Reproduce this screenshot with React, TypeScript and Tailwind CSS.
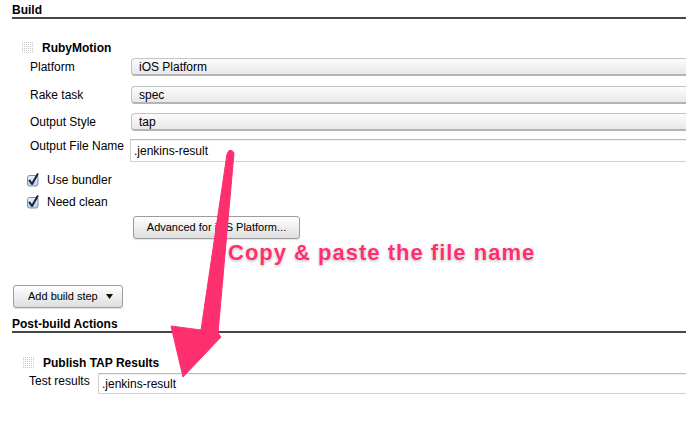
const SELECT =
  "flex items-center flex-1 h-[18px] -mr-3 pl-[7px] rounded-[4px] border border-[#c4c4c4] border-b-2 border-b-[#b4b4b4] bg-linear-to-b from-[#fcfcfc] to-[#e8e8e8] text-[12px] leading-none";
const TEXT_INPUT =
  "flex items-center flex-1 -mr-3 pl-[3px] border border-[#d2d2d2] border-t-[#b9b9b9] bg-white text-[12px] leading-none shadow-[inset_0_1px_1px_rgba(0,0,0,0.06)]";
const BTN =
  "flex items-center h-[23px] rounded-[3px] border border-[#9d9d9d] bg-linear-to-b from-white to-[#dedede] text-[11px] leading-none shadow-[0_1px_1px_rgba(0,0,0,0.12)]";
const SECTION_TITLE = "font-bold border-b-2 border-[#474747]";

function Grip() {
  const dots = [];
  for (let i = 0; i < 6; i++) {
    for (let j = 0; j < 6; j++) {
      dots.push(<rect key={`${i}-${j}`} x={i * 2} y={j * 2} width="1" height="1" fill="#c4c4c4" />);
    }
  }
  return (
    <svg width="12" height="12" viewBox="0 0 12 12" className="shrink-0">
      {dots}
    </svg>
  );
}

function Check() {
  return (
    <svg width="12" height="14" viewBox="0 0 12 14" className="shrink-0">
      <defs>
        <linearGradient id="cb" x1="0" y1="0" x2="0" y2="1">
          <stop offset="0" stopColor="#e9f1fa" />
          <stop offset="1" stopColor="#b9cfe8" />
        </linearGradient>
      </defs>
      <rect x="0.5" y="2.5" width="10.5" height="10.5" rx="2" fill="url(#cb)" stroke="#7d8ea6" />
      <path d="M2.6 7.6 L5 11 L10.6 1.2" fill="none" stroke="#15203a" strokeWidth="2" strokeLinecap="round" strokeLinejoin="round" />
    </svg>
  );
}

function SelectRow({ label, value, gap }: { label: string; value: string; gap: string }) {
  return (
    <div className={`flex items-center h-[18px] ${gap}`}>
      <div className="w-[119px] pl-[18px] leading-[18px]">{label}</div>
      <div className={SELECT}>{value}</div>
    </div>
  );
}

export default function App() {
  return (
    <div className="relative w-[686px] h-[440px] overflow-hidden bg-white text-black text-[12px] font-['Liberation_Sans',Arial,sans-serif]">
      <div className="pl-3 pt-[3px]">
        <div className={`${SECTION_TITLE} leading-[14px]`}>Build</div>

        <div className="mt-[22px] flex items-center gap-2 pl-[10px] leading-[14px]">
          <Grip />
          <span className="font-bold">RubyMotion</span>
        </div>

        <div className="mt-[3px]">
          <SelectRow label="Platform" value="iOS Platform" gap="mb-[10px]" />
          <SelectRow label="Rake task" value="spec" gap="mb-[9px]" />
          <SelectRow label="Output Style" value="tap" gap="mb-[8px]" />
          <div className="flex items-start">
            <div className="w-[118px] pl-[18px] leading-[14px]">Output File Name</div>
            <div className={`${TEXT_INPUT} h-[23px]`}>.jenkins-result</div>
          </div>
        </div>

        <div className="mt-[11px] flex items-center gap-[8px] h-[14px] pl-[15px] leading-[14px]">
          <Check />
          <span>Use bundler</span>
        </div>
        <div className="mt-[8px] flex items-center gap-[8px] h-[14px] pl-[15px] leading-[14px]">
          <Check />
          <span>Need clean</span>
        </div>

        <button type="button" className={`${BTN} mt-[7px] ml-[121px] w-[167px] justify-center`}>
          Advanced for iOS Platform...
        </button>

        <button type="button" className={`${BTN} mt-[46px] ml-[1px] w-[110px] pl-[14px] gap-[8px]`}>
          <span>Add build step</span>
          <svg width="7" height="5" viewBox="0 0 7 5">
            <path d="M0 0 H7 L3.5 5 Z" fill="#111" />
          </svg>
        </button>

        <div className={`${SECTION_TITLE} mt-[10px] leading-[13px]`}>Post-build Actions</div>

        <div className="mt-[23px] flex items-center gap-2 pl-[11px] leading-[14px]">
          <Grip />
          <span className="font-bold">Publish TAP Results</span>
        </div>

        <div className="mt-[3px] flex items-start">
          <div className="w-[86px] pl-[17px] pt-[1px] leading-[14px]">Test results</div>
          <div className={`${TEXT_INPUT} h-[21px]`}>.jenkins-result</div>
        </div>
      </div>

      {/* annotation layer */}
      <div className="absolute left-[228px] top-[242px] text-[22px] leading-[22px] font-bold tracking-[1px] text-[#fe2f6f] [text-shadow:0_0_1px_#fff,0_0_2px_#fff,0_1px_3px_rgba(0,0,0,0.35)]">
        Copy &amp; paste the file name
      </div>
      <svg className="absolute inset-0 pointer-events-none" width="686" height="440" viewBox="0 0 686 440">
        <polygon
          points="227,154 229,150.5 232,150.5 234,153 218,333 221,337 183,377 171,326 201,330"
          fill="#fe2f6f"
          stroke="#fe2f6f"
          strokeWidth="1"
          strokeLinejoin="round"
        />
      </svg>
    </div>
  );
}
